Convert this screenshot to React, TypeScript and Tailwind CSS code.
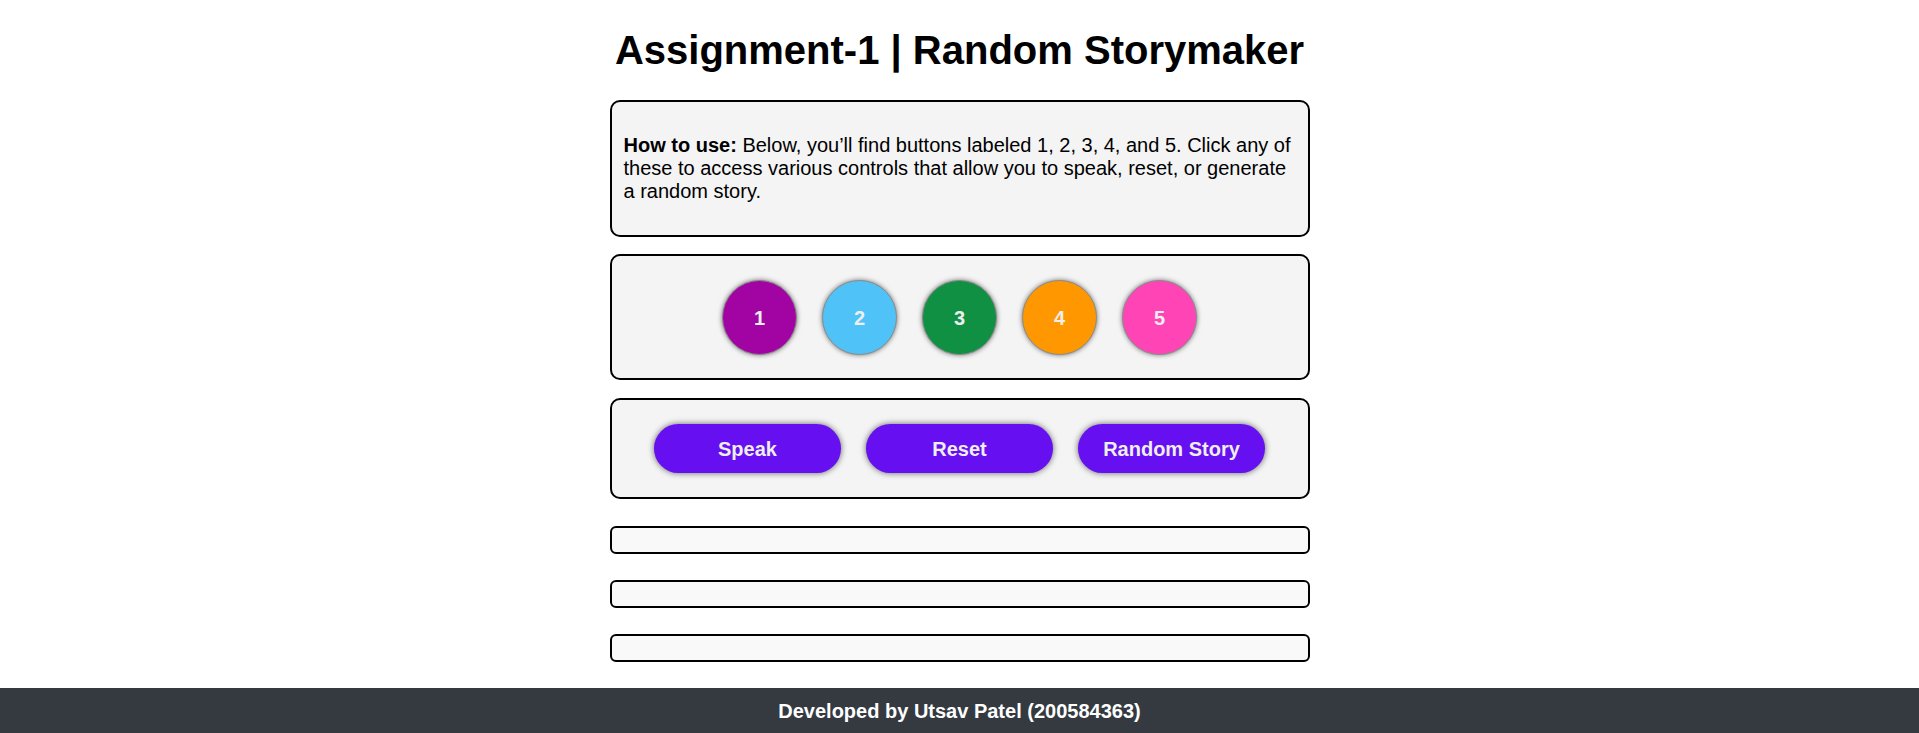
const circles = [
  { label: "1", bg: "bg-[#a204a3]" },
  { label: "2", bg: "bg-[#4fc3f7]" },
  { label: "3", bg: "bg-[#0f9042]" },
  { label: "4", bg: "bg-[#ff9800]" },
  { label: "5", bg: "bg-[#ff44b6]" },
];

const actions = ["Speak", "Reset", "Random Story"];

const App = () => {
  return (
    <div className="min-h-screen bg-white text-[20px] text-black font-['Liberation_Sans',Arial,sans-serif] flex flex-col">
      <div className="w-[700px] mx-auto">
        <h1 className="mt-[27px] mb-[27px] text-[40px] leading-[46px] font-bold text-center">
          Assignment-1 | Random Storymaker
        </h1>

        <div className="border-2 border-black rounded-[10px] bg-[#f4f4f4] px-[12px] pt-[32px] pb-[32px]">
          <p className="leading-[23px]">
            <b>How to use:</b> Below, you’ll find buttons labeled 1, 2, 3, 4, and 5. Click any of these to access
            various controls that allow you to speak, reset, or generate a random story.
          </p>
        </div>

        <div className="mt-[17px] border-2 border-black rounded-[10px] bg-[#f4f4f4] pt-[24px] pb-[23px] flex justify-center gap-[25px]">
          {circles.map((c) => (
            <button
              key={c.label}
              className={`w-[75px] h-[75px] rounded-full ${c.bg} border border-[#8a8a8a] shadow-[0_0_5px_rgba(0,0,0,0.55)] text-[#eeeeee] font-bold text-[20px] flex items-center justify-center`}
            >
              {c.label}
            </button>
          ))}
        </div>

        <div className="mt-[18px] border-2 border-black rounded-[10px] bg-[#f4f4f4] py-[24px] flex justify-center gap-[25px]">
          {actions.map((a) => (
            <button
              key={a}
              className="w-[187px] h-[49px] rounded-full bg-[#660ff1] shadow-[0_0_6px_rgba(0,0,0,0.6)] text-[#eeeeee] font-bold text-[20px]"
            >
              {a}
            </button>
          ))}
        </div>

        <div className="mt-[27px] h-[28px] border-2 border-black rounded-[6px] bg-[#f9f9f9]" />
        <div className="mt-[26px] h-[28px] border-2 border-black rounded-[6px] bg-[#f9f9f9]" />
        <div className="mt-[26px] h-[28px] border-2 border-black rounded-[6px] bg-[#f9f9f9]" />
      </div>

      <footer className="mt-[26px] h-[45px] bg-[#343a40] text-white font-bold text-[20px] flex items-center justify-center">
        Developed by Utsav Patel (200584363)
      </footer>
    </div>
  );
};

export default App;
